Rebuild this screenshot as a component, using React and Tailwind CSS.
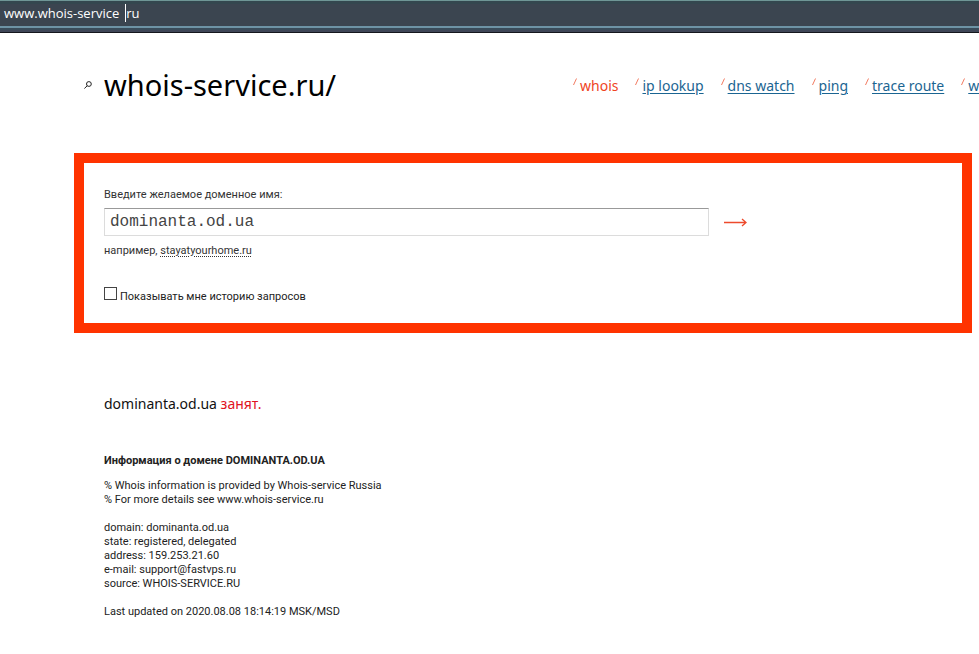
const links = ['ip lookup', 'dns watch', 'ping', 'trace route', 'w'];

const Slash = () => (
  <svg className="mt-0.5 h-2 w-1 shrink-0" viewBox="0 0 4 8" fill="none" stroke="#f37a60" aria-hidden="true">
    <path d="M3.5 0.5 0.5 7" />
  </svg>
);

function AddressBar() {
  return (
    <div className="h-[33px] border-b border-[#15171d] bg-[#3f4657]">
      <div className="border-t border-[#6f9696] bg-[#34474f] pt-[3px]">
        <div className="flex h-[22px] items-start bg-[#3b4550] pl-1 font-['Open_Sans','Noto_Sans',sans-serif] text-[13px] leading-[18px] text-white">
          <span>www.whois-service</span>
          <span className="ml-[6px] h-[18px] w-px bg-white" />
          <span>ru</span>
        </div>
        <div className="h-[2px] bg-[#6d93a5]" />
        <div className="h-[2px] bg-[#3a4c5a]" />
      </div>
    </div>
  );
}

function Header() {
  return (
    <header className="flex items-center pt-8 pl-[84px]">
      <svg className="mr-3 h-2 w-2 shrink-0" viewBox="0 0 8 8" fill="none" stroke="#222" aria-hidden="true">
        <circle cx="4.9" cy="3" r="2.4" />
        <path d="M3.2 4.8 0.4 7.5" />
      </svg>
      <h1 className="w-[469px] shrink-0 text-[29px] leading-10 text-black">whois-service.ru/</h1>
      <nav className="flex shrink-0 gap-[17px] pt-0.5 text-[14px] leading-5">
        <span className="flex gap-[3px] text-[#ef4423]">
          <Slash />
          whois
        </span>
        {links.map((label) => (
          <span key={label} className="flex gap-[3px]">
            <Slash />
            <a href="#" className="text-[#1b6592] underline underline-offset-2">
              {label}
            </a>
          </span>
        ))}
      </nav>
    </header>
  );
}

function SearchForm() {
  return (
    <form className="mt-12 mr-[7px] ml-[74px] border-10 border-[#ff3300] px-5 pt-[25px] pb-[19px] font-['Roboto','Noto_Sans',sans-serif] text-[11px] leading-[14px] text-[#333]">
      <label htmlFor="domain" className="block">
        Введите желаемое доменное имя:
      </label>
      <div className="mt-[6px] flex items-center gap-[15px]">
        <input
          id="domain"
          type="text"
          defaultValue="dominanta.od.ua"
          className="h-7 w-[605px] min-w-0 border border-[#dcdcdc] border-t-[#999] px-[5px] font-['Liberation_Mono',monospace] text-[16px] text-[#444] outline-none"
        />
        <button type="submit" aria-label="Проверить" className="shrink-0">
          <svg className="h-[9px] w-[23px]" viewBox="0 0 23 9" fill="none" stroke="#ed4a2c" aria-hidden="true">
            <path d="M0 4.5H22M18 1 22 4.5 18 8" strokeWidth="1.3" />
          </svg>
        </button>
      </div>
      <p className="mt-2">
        например,{' '}
        <a href="#" className="underline decoration-dotted decoration-1 underline-offset-2">
          stayatyourhome.ru
        </a>
      </p>
      <label className="mt-[29px] flex items-end gap-[3px] text-[#222]">
        <input
          type="checkbox"
          className="mb-1 size-[13px] appearance-none border border-[#444] bg-white checked:bg-[#444]"
        />
        Показывать мне историю запросов
      </label>
    </form>
  );
}

function Result() {
  return (
    <section className="pt-[61px] pl-[104px] font-['Roboto','Noto_Sans',sans-serif] text-[11px] leading-[14px] text-[#222]">
      <p className="font-['Noto_Sans',sans-serif] text-[14px] leading-5 text-[#111]">
        dominanta.od.ua <span className="text-[#e01322]">занят.</span>
      </p>
      <h2 className="mt-10 font-bold">Информация о домене DOMINANTA.OD.UA</h2>
      <p className="mt-[11px]">
        % Whois information is provided by Whois-service Russia
        <br />% For more details see www.whois-service.ru
      </p>
      <p className="mt-[14px]">
        domain: dominanta.od.ua
        <br />
        state: registered, delegated
        <br />
        address: 159.253.21.60
        <br />
        e-mail: support@fastvps.ru
        <br />
        source: WHOIS-SERVICE.RU
      </p>
      <p className="mt-[14px]">Last updated on 2020.08.08 18:14:19 MSK/MSD</p>
    </section>
  );
}

export default function App() {
  return (
    <div className="min-h-screen overflow-hidden bg-white font-['Noto_Sans',sans-serif]">
      <AddressBar />
      <Header />
      <main>
        <SearchForm />
        <Result />
      </main>
    </div>
  );
}
